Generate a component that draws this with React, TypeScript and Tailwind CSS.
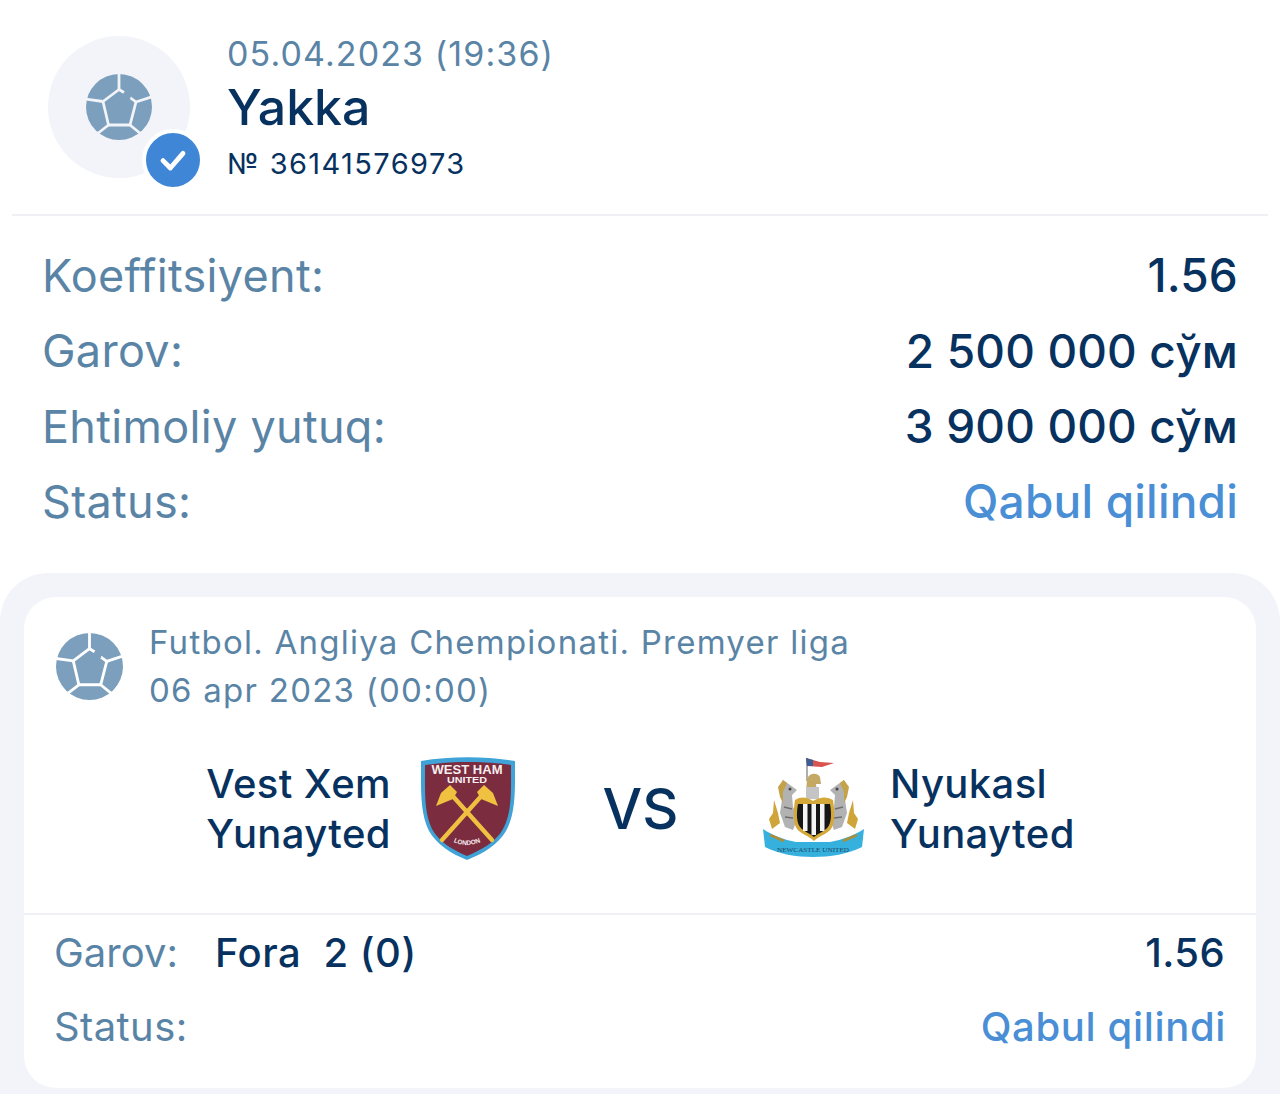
const FONT = "font-['Inter','Noto_Sans',sans-serif]";

function BallIcon({ className }: { className?: string }) {
  return (
    <svg viewBox="0 0 66 66" className={className}>
      <circle cx="33" cy="33" r="33" fill="#7b9fbc" />
      <g fill="none" stroke="var(--gap)" strokeWidth="2.800" strokeLinecap="butt" strokeLinejoin="round">
        <path d="M33 -1V15.500" />
        <path d="M33 15.500L17 27.500L22.500 51H44L50 28" />
        <path d="M44 23.500L50 28" />
        <path d="M-1 25L17 27.500" />
        <path d="M50 28L68 22" />
        <path d="M22.500 51L11 60" />
        <path d="M44 51L55 60" />
      </g>
      <path d="M37.500 17L45 24L33 30Z" fill="#7b9fbc" />
      <path d="M33 15.500L38 18.500" fill="none" stroke="var(--gap)" strokeWidth="2.800" />
    </svg>
  );
}

function WestHamCrest() {
  return (
    <svg viewBox="0 0 96 104" className="h-[104px] w-[96px]">
      <defs>
        <path id="london-arc" d="M28 82Q47 94 66 82" />
      </defs>
      <path d="M1 4C30 -1 66 -1 95 4C95 34 96 56 86 74C78 88 62 97 47 103C32 97 17 88 9 74C0 56 1 34 1 4Z" fill="#3fa3d8" />
      <path d="M5 8C32 4 64 4 91 8C91 36 92 55 83 72C76 85 61 93 47 99C33 93 19 85 12 72C4 55 5 36 5 8Z" fill="#7b2c3f" />
      <text x="47" y="17" textAnchor="middle" fontFamily="'Liberation Sans',sans-serif" fontWeight="700" fontSize="12" fill="#f6eef0" textLength="71" lengthAdjust="spacingAndGlyphs">WEST HAM</text>
      <text x="47" y="26" textAnchor="middle" fontFamily="'Liberation Sans',sans-serif" fontWeight="700" fontSize="9" fill="#f6eef0" textLength="40" lengthAdjust="spacingAndGlyphs">UNITED</text>
      <g stroke="#f0c040" strokeWidth="4.400" strokeLinecap="round" fill="none">
        <path d="M30 36L72 83" />
        <path d="M64 36L22 83" />
      </g>
      <g fill="#f0c040">
        <path d="M30 28L37 35L33 42L16 49L21 36Z" />
        <path d="M64 28L57 35L61 42L78 49L73 36Z" />
      </g>
      <text fontFamily="'Liberation Sans',sans-serif" fontWeight="700" fontSize="6.500" fill="#f6eef0">
        <textPath href="#london-arc" startOffset="50%" textAnchor="middle">LONDON</textPath>
      </text>
    </svg>
  );
}

function NewcastleCrest() {
  return (
    <svg viewBox="0 0 106 104" className="h-[104px] w-[106px]">
      {/* flag and knight */}
      <path d="M47 1V24" stroke="#8d8d8d" strokeWidth="1.400" />
      <path d="M46 1L60 5L74 6L62 10L47 9Z" fill="#d9534f" />
      <path d="M46 1L53 3L53 9L47 9Z" fill="#3a5f96" />
      <path d="M47 22C49 16 57 15 60 20L61 27L56 27L57 36L46 36Z" fill="#c3a963" />
      <path d="M46 30H59V42H46Z" fill="#c4c4c4" />
      {/* gold side fins */}
      <path d="M14 43L18 56L20 66L12 72L9 62L13 56Z" fill="#cfa53a" />
      <path d="M93 43L89 56L87 66L95 72L98 62L94 56Z" fill="#cfa53a" />
      {/* seahorses */}
      <path d="M23 23L37 33L32 38L33 50L38 60L33 73L25 70L20 56L22 43L19 33Z" fill="#b2b2b2" />
      <path d="M23 23L18 30L20 40L23 46L23 35L27 26Z" fill="#c4a24a" />
      <path d="M84 23L70 33L75 38L74 50L69 60L74 73L82 70L87 56L85 43L88 33Z" fill="#b2b2b2" />
      <path d="M84 23L89 30L87 40L84 46L84 35L80 26Z" fill="#c4a24a" />
      <circle cx="30" cy="32" r="1.500" fill="#444" />
      <circle cx="77" cy="32" r="1.500" fill="#444" />
      <path d="M24 50L32 52M25 60L33 61M83 50L75 52M82 60L74 61" stroke="#6e6e6e" strokeWidth="1.500" />
      {/* ribbon */}
      <path d="M3 72C12 78 24 83 36 85H70C82 83 95 78 104 72L102 90C88 97 70 100 53 100C36 100 19 97 5 90Z" fill="#36b0dc" />
      <path d="M10 78L24 84M97 78L83 84" stroke="#a98f3c" strokeWidth="2.500" />
      {/* shield */}
      <path d="M35 43C41 39 47 40 53 44C60 40 66 39 73 43C75 56 75 66 71 72C67 77 59 79 54 84C49 79 41 77 37 72C33 66 33 56 35 43Z" fill="#d4a93a" />
      <path d="M38 47H70C72 58 71 66 68 70C64 75 58 76 54 80C50 76 44 75 40 70C37 66 36 58 38 47Z" fill="#161616" />
      <path d="M43 47H47.500V74H43ZM51.500 47H56V78H51.500ZM60 47H64.500V74H60Z" fill="#f4f4f4" />
      <text x="53" y="95" textAnchor="middle" fontFamily="'Liberation Serif',serif" fontSize="6.500" fill="#1b4a68" textLength="72" lengthAdjust="spacingAndGlyphs">NEWCASTLE UNITED</text>
    </svg>
  );
}

function SummaryRow({ label, value, accent }: { label: string; value: string; accent?: boolean }) {
  return (
    <div className="flex h-[75.4px] items-center justify-between">
      <span className="text-[45px] tracking-[0.3px] text-[#5a84a6]">{label}</span>
      <span className={accent ? "text-[46px] font-[450] tracking-[0.2px] text-[#4a8fd6]" : "text-[46px] font-medium tracking-[0.15px] text-[#07325f]"}>{value}</span>
    </div>
  );
}

export default function App() {
  return (
    <div className={`${FONT} flex h-[1094px] w-[1280px] flex-col overflow-hidden bg-white`}>
      {/* header */}
      <div className="mx-3 flex h-[216px] shrink-0 gap-[37px] border-b-2 border-[#eef0f5] pl-9">
        <div className="relative mt-9 h-[142px] w-[142px] shrink-0 rounded-full bg-[#f2f4f9]">
          <div className="flex h-full items-center justify-center">
            <BallIcon className="h-[66px] w-[66px] [--gap:#f2f4f9]" />
          </div>
          <div className="absolute left-[94px] top-[93px] flex h-[62px] w-[62px] items-center justify-center rounded-full border-[4px] border-white bg-[#3f87d6]">
            <svg viewBox="0 0 24 24" className="h-[32px] w-[32px]" fill="none" stroke="#fff" strokeWidth="3.600" strokeLinecap="round" strokeLinejoin="round">
              <path d="M4.500 12.500L10 18L19.500 7" />
            </svg>
          </div>
        </div>
        <div className="mt-[34px] flex flex-col">
          <div className="h-[39px] text-[34px] leading-[40px] tracking-[1.1px] text-[#5a84a6]">05.04.2023 (19:36)</div>
          <div className="h-[69px] text-[50px] font-medium leading-[68px] text-[#07325f]">Yakka</div>
          <div className="h-[44px] text-[29px] leading-[44px] tracking-[1.4px] text-[#07325f]">№ 36141576973</div>
        </div>
      </div>

      {/* summary */}
      <div className="flex h-[357px] shrink-0 flex-col pl-[42px] pr-[42px] pt-[22px]">
        <SummaryRow label="Koeffitsiyent:" value="1.56" />
        <SummaryRow label="Garov:" value="2 500 000 сўм" />
        <SummaryRow label="Ehtimoliy yutuq:" value="3 900 000 сўм" />
        <SummaryRow label="Status:" value="Qabul qilindi" accent />
      </div>

      {/* event card */}
      <div className="flex-1 rounded-t-[48px] bg-[#f2f4f9] px-6 pb-[6px] pt-6">
        <div className="flex h-[491px] flex-col rounded-[32px] bg-white">
          <div className="flex h-[318px] shrink-0 flex-col border-b-2 border-[#eef0f5]">
            <div className="flex items-center gap-[26px] pl-8 pt-[21px]">
              <BallIcon className="h-[67px] w-[67px] [--gap:#ffffff]" />
              <div className="text-[33px] leading-[48px] tracking-[1.25px] text-[#5a84a6]">
                <div>Futbol. Angliya Chempionati. Premyer liga</div>
                <div>06 apr 2023 (00:00)</div>
              </div>
            </div>
            <div className="mt-[43px] flex items-center">
              <div className="w-[367px] text-right text-[40px] font-medium leading-[50px] tracking-[0.4px] text-[#07325f]">
                Vest Xem
                <br />
                Yunayted
              </div>
              <div className="ml-[29px]">
                <WestHamCrest />
              </div>
              <div className="w-[244px] pl-[5px] text-center text-[56px] font-medium text-[#07325f]">VS</div>
              <NewcastleCrest />
              <div className="ml-[24px] text-[40px] font-medium leading-[50px] tracking-[0.4px] text-[#07325f]">
                Nyukasl
                <br />
                Yunayted
              </div>
            </div>
          </div>
          <div className="flex flex-col px-[30px] pt-[1px] text-[40px] leading-[74px]">
            <div className="flex justify-between">
              <div className="flex gap-[37px]">
                <span className="text-[#5a84a6]">Garov:</span>
                <span className="whitespace-pre font-medium tracking-[0.5px] text-[#07325f]">Fora  2 (0)</span>
              </div>
              <span className="pr-[1px] font-medium tracking-[0.4px] text-[#07325f]">1.56</span>
            </div>
            <div className="flex justify-between">
              <span className="tracking-[0.4px] text-[#5a84a6]">Status:</span>
              <span className="font-[450] tracking-[0.65px] text-[#4a8fd6]">Qabul qilindi</span>
            </div>
          </div>
        </div>
      </div>
    </div>
  );
}
